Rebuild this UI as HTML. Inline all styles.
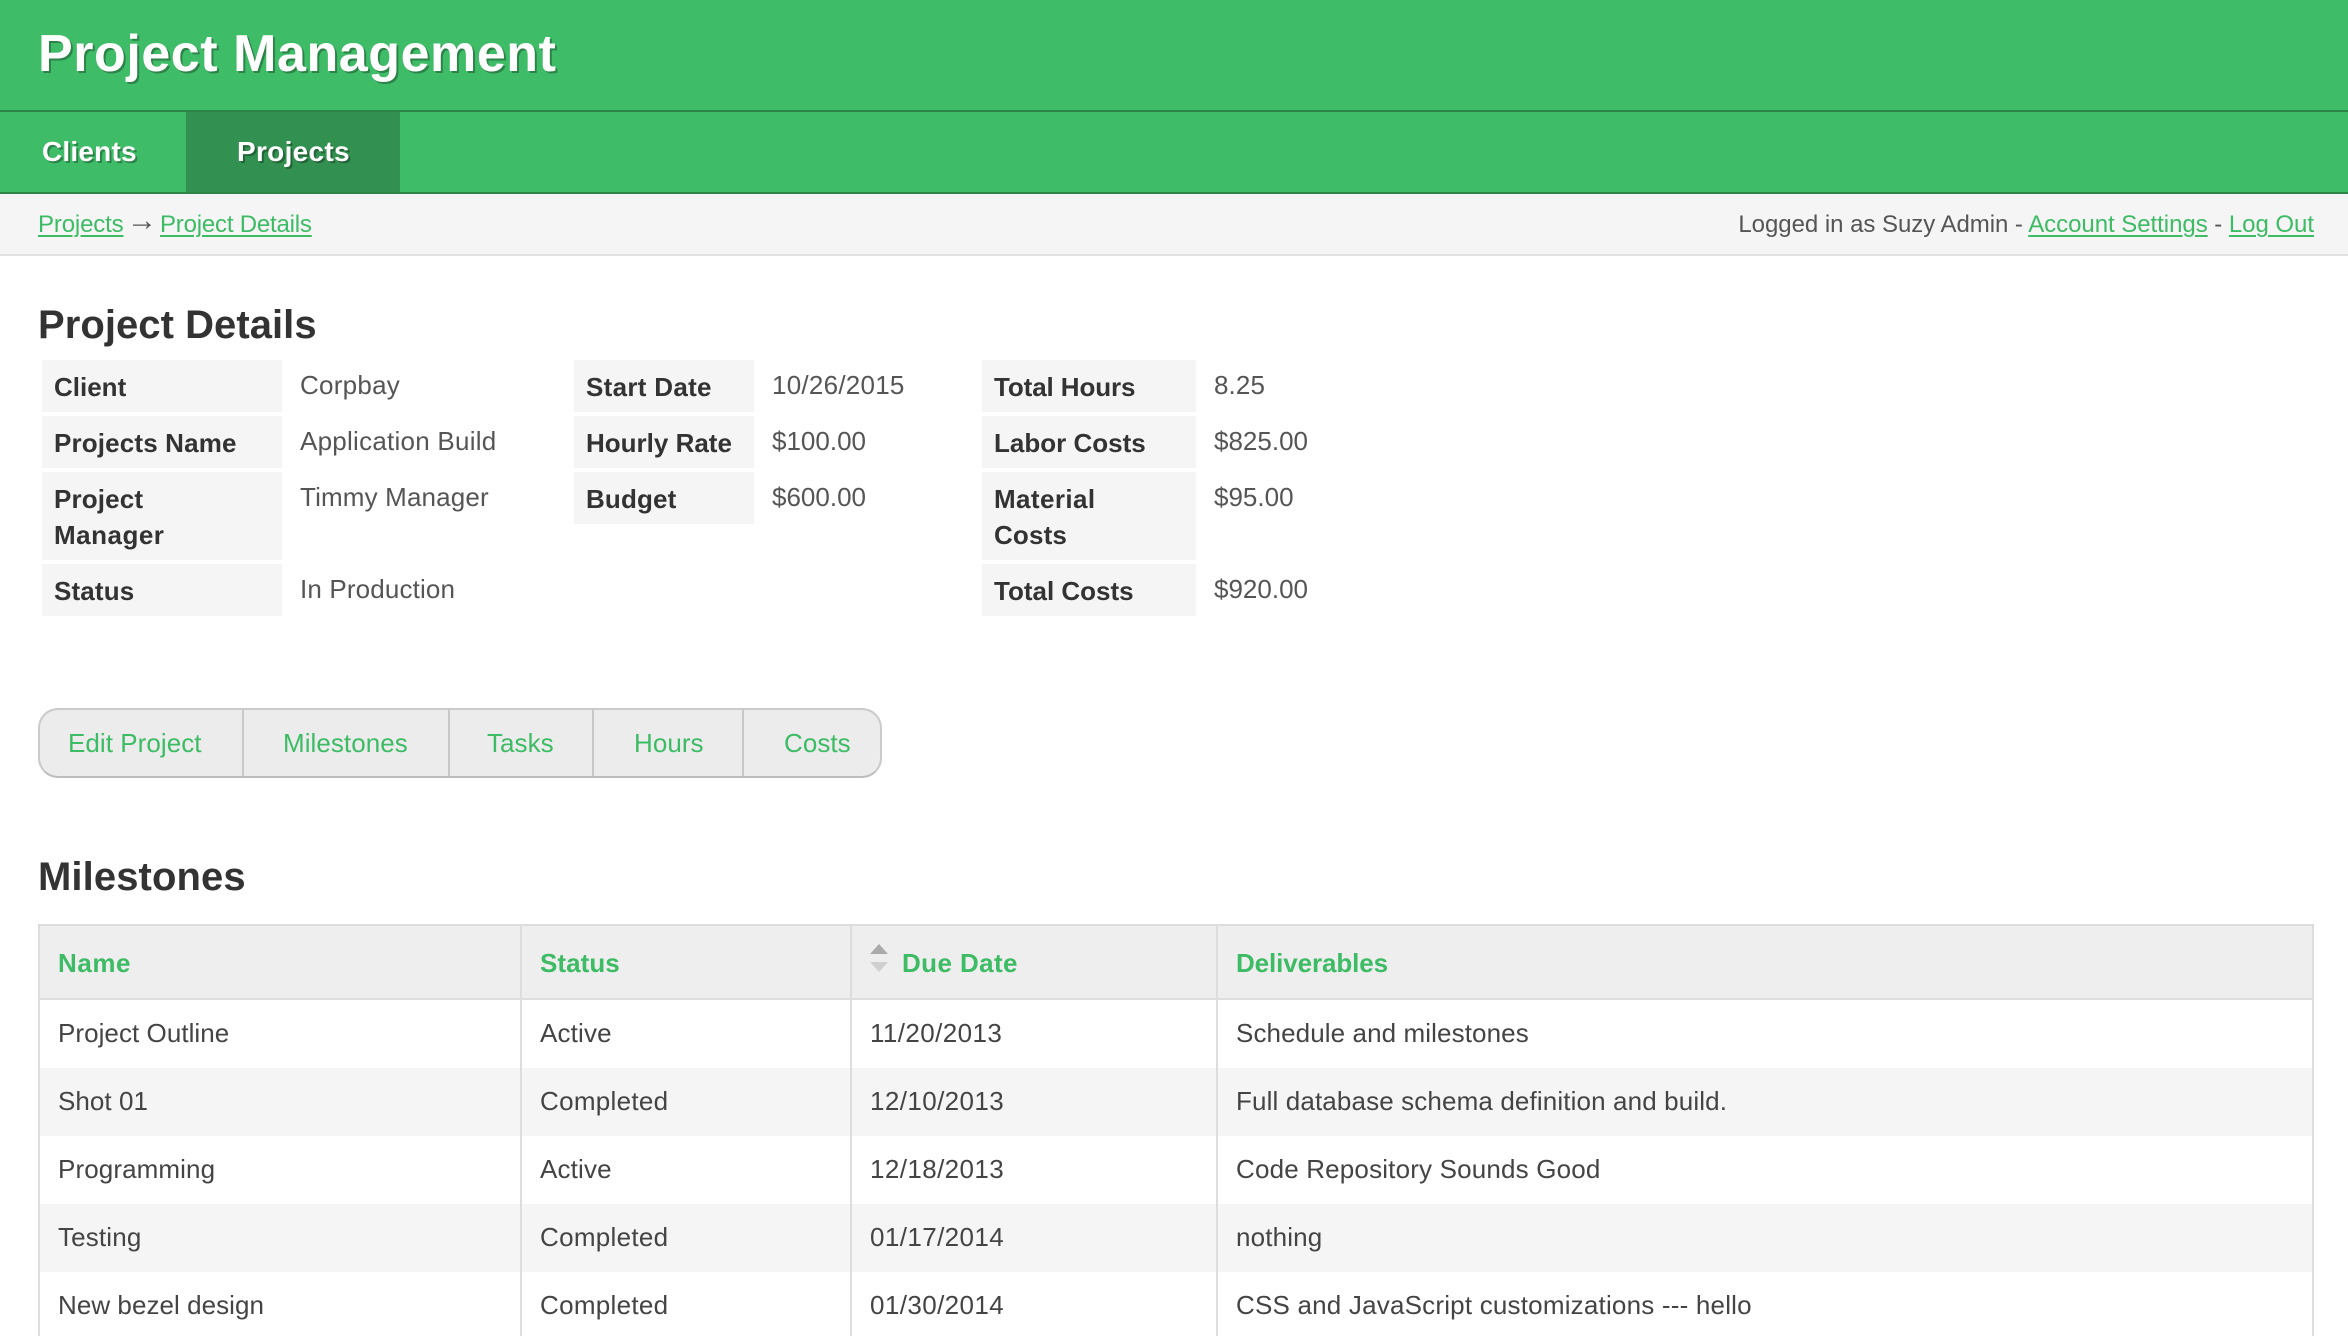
<!DOCTYPE html>
<html lang="en">
<head>
<meta charset="utf-8">
<title>Project Management</title>
<style>
html,body{margin:0;padding:0;background:#fff;}
body{position:relative;width:2348px;height:1336px;overflow:hidden;font-family:"Liberation Sans",Arial,sans-serif;color:#444;}
.b{position:absolute;}
.t{position:absolute;line-height:0;white-space:nowrap;font-size:26px;letter-spacing:.15px;}
.h{font-weight:bold;color:#333;}
.l{font-weight:bold;color:#333;letter-spacing:.15px;}
.v{color:#555;}
a{color:#3dbb65;text-decoration:none;}
.c{font-size:24px;letter-spacing:0;}
.c a{text-decoration:underline;text-decoration-thickness:2px;text-underline-offset:3px;}
.w{color:#fff;font-weight:bold;text-shadow:2px 2px 0 rgba(0,0,0,.3);}
.g{color:#3dbb65;}
.gb{color:#3dbb65;font-weight:bold;letter-spacing:.15px;}
.cell{position:absolute;background:#f5f5f5;}
</style>
</head>
<body>
<!-- header -->
<div class="b" style="left:0;top:0;width:2348px;height:110px;background:#3fbc67;"></div>
<div class="b" style="left:0;top:110px;width:2348px;height:2px;background:#2d8548;"></div>
<div class="t w" style="left:38px;top:54px;font-size:52px;letter-spacing:.55px;">Project Management</div>
<!-- nav -->
<div class="b" style="left:0;top:112px;width:2348px;height:80px;background:#3fbc67;"></div>
<div class="b" style="left:186px;top:112px;width:214px;height:80px;background:#329150;"></div>
<div class="b" style="left:0;top:192px;width:2348px;height:2px;background:#2d8548;"></div>
<div class="t w" style="left:42px;top:152px;font-size:28px;letter-spacing:.2px;">Clients</div>
<div class="t w" style="left:237px;top:152px;font-size:28px;letter-spacing:.3px;">Projects</div>
<!-- sub bar -->
<div class="b" style="left:0;top:194px;width:2348px;height:60px;background:#f5f5f5;"></div>
<div class="b" style="left:0;top:254px;width:2348px;height:2px;background:#e2e2e2;"></div>
<div class="t c" style="left:38px;top:225px;letter-spacing:-.15px;"><a href="#">Projects</a></div>
<div class="t" style="left:127px;top:221px;font-size:30px;color:#555;letter-spacing:0;">→</div>
<div class="t c" style="left:160px;top:225px;letter-spacing:-.2px;"><a href="#">Project Details</a></div>
<div class="t c" style="right:34px;top:225px;color:#555;letter-spacing:-.04px;">Logged in as Suzy Admin - <a href="#">Account Settings</a> - <a href="#">Log Out</a></div>

<!-- project details -->
<div class="t h" style="left:38px;top:325px;font-size:40px;letter-spacing:.05px;">Project Details</div>

<div class="cell" style="left:42px;top:360px;width:240px;height:52px;"></div>
<div class="cell" style="left:42px;top:416px;width:240px;height:52px;"></div>
<div class="cell" style="left:42px;top:472px;width:240px;height:88px;"></div>
<div class="cell" style="left:42px;top:564px;width:240px;height:52px;"></div>
<div class="t l" style="left:54px;top:387px;letter-spacing:0;">Client</div>
<div class="t l" style="left:54px;top:443px;">Projects Name</div>
<div class="t l" style="left:54px;top:499px;">Project</div>
<div class="t l" style="left:54px;top:535px;letter-spacing:.5px;">Manager</div>
<div class="t l" style="left:54px;top:591px;">Status</div>
<div class="t v" style="left:300px;top:385px;letter-spacing:.25px;">Corpbay</div>
<div class="t v" style="left:300px;top:441px;letter-spacing:.25px;">Application Build</div>
<div class="t v" style="left:300px;top:497px;">Timmy Manager</div>
<div class="t v" style="left:300px;top:589px;">In Production</div>

<div class="cell" style="left:574px;top:360px;width:180px;height:52px;"></div>
<div class="cell" style="left:574px;top:416px;width:180px;height:52px;"></div>
<div class="cell" style="left:574px;top:472px;width:180px;height:52px;"></div>
<div class="t l" style="left:586px;top:387px;letter-spacing:.3px;">Start Date</div>
<div class="t l" style="left:586px;top:443px;letter-spacing:0;">Hourly Rate</div>
<div class="t l" style="left:586px;top:499px;">Budget</div>
<div class="t v" style="left:772px;top:385px;letter-spacing:.25px;">10/26/2015</div>
<div class="t v" style="left:772px;top:441px;letter-spacing:0;">$100.00</div>
<div class="t v" style="left:772px;top:497px;letter-spacing:0;">$600.00</div>

<div class="cell" style="left:982px;top:360px;width:214px;height:52px;"></div>
<div class="cell" style="left:982px;top:416px;width:214px;height:52px;"></div>
<div class="cell" style="left:982px;top:472px;width:214px;height:88px;"></div>
<div class="cell" style="left:982px;top:564px;width:214px;height:52px;"></div>
<div class="t l" style="left:994px;top:387px;letter-spacing:-.1px;">Total Hours</div>
<div class="t l" style="left:994px;top:443px;letter-spacing:0;">Labor Costs</div>
<div class="t l" style="left:994px;top:499px;letter-spacing:.4px;">Material</div>
<div class="t l" style="left:994px;top:535px;">Costs</div>
<div class="t l" style="left:994px;top:591px;letter-spacing:0;">Total Costs</div>
<div class="t v" style="left:1214px;top:385px;letter-spacing:.1px;">8.25</div>
<div class="t v" style="left:1214px;top:441px;letter-spacing:0;">$825.00</div>
<div class="t v" style="left:1214px;top:497px;letter-spacing:0;">$95.00</div>
<div class="t v" style="left:1214px;top:589px;letter-spacing:0;">$920.00</div>

<!-- button group -->
<div class="b" style="left:38px;top:708px;width:840px;height:66px;background:#ececec;border:2px solid #cacaca;border-bottom:2px solid #bdbdbd;border-radius:20px;"></div>
<div class="b" style="left:242px;top:710px;width:2px;height:66px;background:#c8c8c8;"></div>
<div class="b" style="left:448px;top:710px;width:2px;height:66px;background:#c8c8c8;"></div>
<div class="b" style="left:592px;top:710px;width:2px;height:66px;background:#c8c8c8;"></div>
<div class="b" style="left:742px;top:710px;width:2px;height:66px;background:#c8c8c8;"></div>
<a class="t g" href="#" style="left:68px;top:743px;letter-spacing:.05px;">Edit Project</a>
<a class="t g" href="#" style="left:283px;top:743px;letter-spacing:.05px;">Milestones</a>
<a class="t g" href="#" style="left:487px;top:743px;letter-spacing:.05px;">Tasks</a>
<a class="t g" href="#" style="left:634px;top:743px;letter-spacing:.05px;">Hours</a>
<a class="t g" href="#" style="left:784px;top:743px;letter-spacing:.05px;">Costs</a>

<!-- milestones -->
<div class="t h" style="left:38px;top:877px;font-size:40px;letter-spacing:.1px;">Milestones</div>

<div class="b" style="left:40px;top:926px;width:2272px;height:72px;background:#eee;"></div>
<div class="b" style="left:40px;top:1068px;width:2272px;height:68px;background:#f5f5f5;"></div>
<div class="b" style="left:40px;top:1204px;width:2272px;height:68px;background:#f5f5f5;"></div>
<div class="b" style="left:38px;top:924px;width:2276px;height:2px;background:#ddd;"></div>
<div class="b" style="left:38px;top:998px;width:2276px;height:2px;background:#ddd;"></div>
<div class="b" style="left:38px;top:924px;width:2px;height:412px;background:#ddd;"></div>
<div class="b" style="left:520px;top:924px;width:2px;height:412px;background:#ddd;"></div>
<div class="b" style="left:850px;top:924px;width:2px;height:412px;background:#ddd;"></div>
<div class="b" style="left:1216px;top:924px;width:2px;height:412px;background:#ddd;"></div>
<div class="b" style="left:2312px;top:924px;width:2px;height:412px;background:#ddd;"></div>

<a class="t gb" href="#" style="left:58px;top:963px;letter-spacing:.55px;">Name</a>
<a class="t gb" href="#" style="left:540px;top:963px;letter-spacing:.05px;">Status</a>
<svg class="b" style="left:870px;top:944px;" width="18" height="28" viewBox="0 0 18 28"><path d="M0 10 L9 0 L18 10Z" fill="#aaa"/><path d="M0 18 L18 18 L9 28Z" fill="#d0d0d0"/></svg>
<a class="t gb" href="#" style="left:902px;top:963px;letter-spacing:.4px;">Due Date</a>
<a class="t gb" href="#" style="left:1236px;top:963px;letter-spacing:-.1px;">Deliverables</a>

<div class="t" style="left:58px;top:1033px;letter-spacing:.05px;">Project Outline</div>
<div class="t" style="left:540px;top:1033px;">Active</div>
<div class="t" style="left:870px;top:1033px;letter-spacing:.4px;">11/20/2013</div>
<div class="t" style="left:1236px;top:1033px;letter-spacing:.1px;">Schedule and milestones</div>

<div class="t" style="left:58px;top:1101px;letter-spacing:.05px;">Shot 01</div>
<div class="t" style="left:540px;top:1101px;letter-spacing:.3px;">Completed</div>
<div class="t" style="left:870px;top:1101px;letter-spacing:.4px;">12/10/2013</div>
<div class="t" style="left:1236px;top:1101px;letter-spacing:.13px;">Full database schema definition and build.</div>

<div class="t" style="left:58px;top:1169px;letter-spacing:.1px;">Programming</div>
<div class="t" style="left:540px;top:1169px;">Active</div>
<div class="t" style="left:870px;top:1169px;letter-spacing:.4px;">12/18/2013</div>
<div class="t" style="left:1236px;top:1169px;letter-spacing:.17px;">Code Repository Sounds Good</div>

<div class="t" style="left:58px;top:1237px;">Testing</div>
<div class="t" style="left:540px;top:1237px;letter-spacing:.3px;">Completed</div>
<div class="t" style="left:870px;top:1237px;letter-spacing:.4px;">01/17/2014</div>
<div class="t" style="left:1236px;top:1237px;">nothing</div>

<div class="t" style="left:58px;top:1305px;letter-spacing:.05px;">New bezel design</div>
<div class="t" style="left:540px;top:1305px;letter-spacing:.3px;">Completed</div>
<div class="t" style="left:870px;top:1305px;letter-spacing:.4px;">01/30/2014</div>
<div class="t" style="left:1236px;top:1305px;letter-spacing:.2px;">CSS and JavaScript customizations --- hello</div>
</body>
</html>
